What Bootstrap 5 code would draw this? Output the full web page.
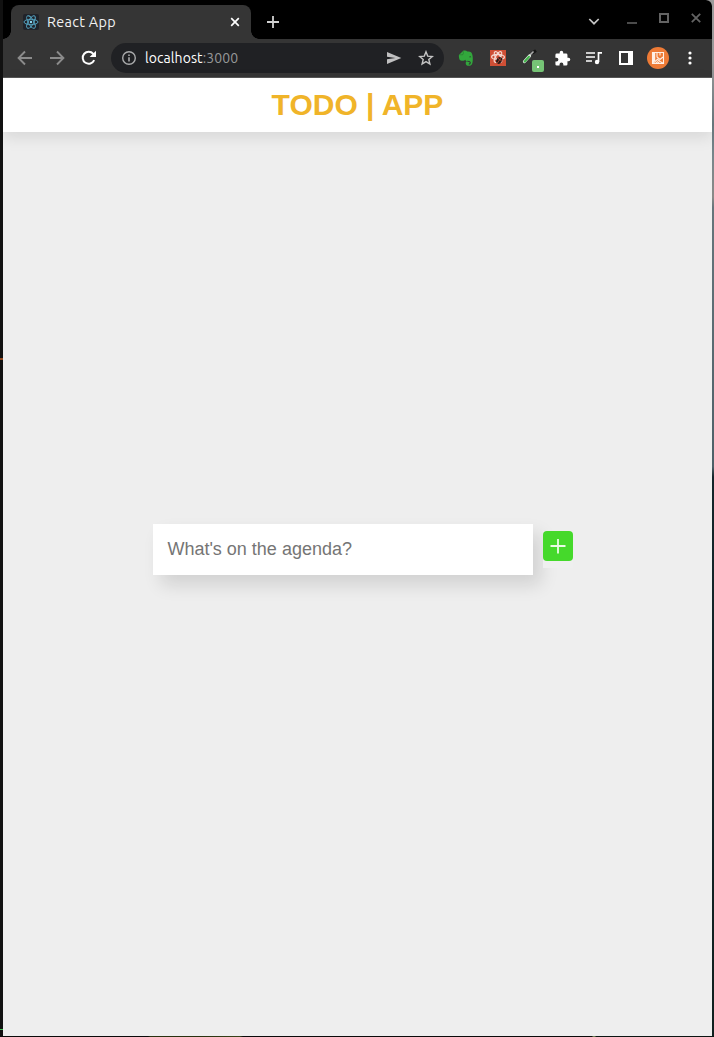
<!DOCTYPE html>
<html lang="en">
<head>
<meta charset="utf-8">
<title>React App</title>
<meta name="viewport" content="width=device-width, initial-scale=1">
<link href="https://cdn.jsdelivr.net/npm/bootstrap@5.3.0/dist/css/bootstrap.min.css" rel="stylesheet">
<style>
  body { background: linear-gradient(90deg, #0a0a0a 148px, #28300f 150px 200px, #38431a 240px, #0a0a0a 243px 592px, #6a7a50 593px 595px, #0c1513 596px) 0 100% / 100% 1px no-repeat, linear-gradient(90deg, #111 50%, transparent 50%), linear-gradient(#9b9b9b, #999 6%, #66757b 12%, #77868b 15%, #8b8a88 19%, #66757b 20%, #4e6068 45%, #14242a 46%, #10201f); overflow: hidden; }
  svg { display: block; flex: none; }
  .desk { height: 1037px; padding: 0 2px 1px 3px; position: relative; }
  .mark-l { position: absolute; left: 0; width: 3px; height: 2px; }
  .window { height: 1036px; border-radius: 0 6px 0 0; overflow: hidden; background: #eee; }
  .tabstrip { height: 39px; background: #000; padding: 5px 0 0 8px; }
  .tab { width: 240px; height: 34px; background: #353535; border-radius: 8px 8px 0 0; position: relative; padding: 0 10px 0 12px; color: #f1f1f1; font: 14.4px "Ubuntu", "Noto Sans", sans-serif; }
  .tab::before, .tab::after { content: ""; position: absolute; bottom: 0; width: 8px; height: 8px; }
  .tab::before { left: -8px; background: radial-gradient(circle at 0 0, #000 7.5px, #353535 8px); }
  .tab::after { right: -8px; background: radial-gradient(circle at 100% 0, #000 7.5px, #353535 8px); }
  .tab-title { letter-spacing: .32px; }
  .cell { width: 32px; height: 32px; display: flex; align-items: center; justify-content: center; flex: none; }
  .toolbar { height: 39px; background: #353535; border-bottom: 1px solid #585858; padding: 0 6px; }
  .address { height: 30px; border-radius: 15px; background: #202124; margin: 0 6px; padding-left: 10px; padding-right: 2px; font: 14px "Ubuntu", "Noto Sans", sans-serif; color: #fff; }
  .address .port { color: #969798; }
  .url { letter-spacing: .08px; }
  .app-head { height: 54px; background: #fff; color: #f0b429; font: bold 30px/54px "Liberation Sans", sans-serif; box-shadow: 0 5px 15px rgba(0,0,0,.1); position: relative; }
  .page { height: 904px; }
  .agenda { padding: 392px 0 0 150px; font-family: "Liberation Sans", sans-serif; }
  .agenda-input { width: 380px; height: 51px; border: 0; background: #fff; padding: 0 14.4px; font-size: 18px; box-shadow: 8px 10px 18px rgba(0,0,0,.12); outline: 0; }
  .agenda-input::placeholder { color: #757575; opacity: 1; }
  .add { width: 30px; height: 37px; border: 0; padding: 0; margin: 7px 0 0 10px; background: #efefef; position: relative; }
</style>
</head>
<body>
<div class="desk">
  <i class="mark-l" style="top:358px;background:#94481f"></i>
  <i class="mark-l" style="top:1029px;height:1px;background:#42bd55"></i>
  <div class="window d-flex flex-column">
    <div class="tabstrip d-flex">
      <div class="tab d-flex align-items-center">
        <svg width="16" height="16" viewBox="0 0 16 16"><rect width="16" height="16" rx="2" fill="#20232a"/><g fill="none" stroke="#56a8c6" stroke-width=".9"><ellipse cx="8" cy="8" rx="7" ry="2.7"/><ellipse cx="8" cy="8" rx="7" ry="2.7" transform="rotate(60 8 8)"/><ellipse cx="8" cy="8" rx="7" ry="2.7" transform="rotate(120 8 8)"/></g><circle cx="8" cy="8" r="1.2" fill="#8edcf6"/></svg>
        <span class="tab-title ms-2 me-auto">React App</span>
        <svg width="12" height="12" viewBox="0 0 12 12" stroke="#fff" stroke-width="1.7"><path d="M2.2 2.2l7.6 7.6M9.8 2.2L2.2 9.8"/></svg>
      </div>
      <div class="cell" style="margin:1px 0 0 6px"><svg width="12" height="12" viewBox="0 0 12 12" stroke="#d0d0d0" stroke-width="1.8"><path d="M6 0v12M0 6h12"/></svg></div>
      <div class="d-flex ms-auto" style="height:26px">
        <div class="cell me-2"><svg width="12" height="12" viewBox="0 0 12 12" fill="none" stroke="#c4c4c4" stroke-width="1.7"><path d="M1.300 4L6 8.700 10.700 4"/></svg></div>
        <div class="cell" style="margin-left:-2px"><svg width="10" height="12" viewBox="0 0 10 12"><path d="M0 7h10v2H0z" fill="#4b4b4b"/></svg></div>
        <div class="cell" style="height:26px"><svg width="10" height="10" viewBox="0 0 10 10"><path d="M1 1h8v8H1z" fill="none" stroke="#636363" stroke-width="2"/></svg></div>
        <div class="cell" style="height:26px"><svg width="10" height="10" viewBox="0 0 10 10" stroke="#636363" stroke-width="1.8"><path d="M.8.8l8.4 8.4M9.2.8L.8 9.2"/></svg></div>
      </div>
    </div>
    <div class="toolbar d-flex align-items-center">
      <div class="cell"><svg width="16" height="16" viewBox="0 0 16 16" fill="none" stroke="#8b8b8b" stroke-width="1.9"><path d="M15 8H2M8 1.5L1.6 8 8 14.5"/></svg></div>
      <div class="cell"><svg width="16" height="16" viewBox="0 0 16 16" fill="none" stroke="#8b8b8b" stroke-width="1.9"><path d="M1 8h13M8 1.5L14.4 8 8 14.5"/></svg></div>
      <div class="cell"><svg width="16" height="16" viewBox="0 0 16 16"><path d="M13.2 10.2A6 6 0 1 1 12.3 3.8L13.4 5" fill="none" stroke="#fff" stroke-width="2"/><path d="M15 .8V7H8.6z" fill="#fff"/></svg></div>
      <div class="address d-flex align-items-center flex-grow-1">
        <svg width="16" height="16" viewBox="0 0 16 16"><circle cx="8" cy="8" r="6.3" fill="none" stroke="#aaabac" stroke-width="1.4"/><path d="M7.2 7.2h1.6v4.3H7.2zM7.2 4.4h1.6V6H7.2z" fill="#aaabac"/></svg>
        <span class="url ms-2 me-auto">localhost<span class="port">:3000</span></span>
        <div class="cell"><svg width="16" height="16" viewBox="0 0 16 16"><path d="M1 2l14.3 6L1 14V9.3L9.5 8 1 6.7z" fill="#c0c0c1"/></svg></div>
        <div class="cell"><svg width="16" height="16" viewBox="0 0 16 16"><path d="M8 1.8l1.7 4.3 4.6.4-3.5 3 1.1 4.5L8 11.6 4.1 14l1.1-4.5-3.5-3 4.6-.4z" fill="none" stroke="#c4c4c4" stroke-width="1.4"/></svg></div>
      </div>
      <div class="cell"><svg width="16" height="16" viewBox="0 0 16 16"><path fill="#32a73c" d="M5.500.6Q8 0 9.300 1.400c1.800 0 3.800.3 4.200 1.300.9 1.500 1.300 3.300 1.300 6.300 0 4-.8 6.800-3.600 6.800-2.400 0-3.500-1-3.500-2.600 0-.9.500-1.600 1.200-2-.9-.3-1.400-.8-1.700-1.500-.7 1-2.500 1.400-4.500.8C1.300 10 .7 7.500.9 4.900L5 .9z"/><path d="M1.500 4.800h2.600q1.200 0 1.200-1.200V1.200" fill="none" stroke="#2a7030" stroke-width=".6"/><path d="M9.300 11.200c1.800 0 3 .2 3 1.600 0 .8-.5 1.300-1.500 1.300" fill="none" stroke="#353535" stroke-width="1.100"/><path d="M11.200 7.200c.3-1.300 1.600-1.200 2 .1-.7-.2-1.300-.2-2-.1z" fill="#303830"/></svg></div>
      <div class="cell"><svg width="16" height="16" viewBox="0 0 16 16"><rect width="16" height="16" fill="#cf4f35"/><g fill="none" stroke="#f5d8d0" stroke-width="1.300"><ellipse cx="8" cy="7" rx="6.400" ry="2.500"/><ellipse cx="8" cy="7" rx="6" ry="2.400" transform="rotate(60 8 7)"/><ellipse cx="8" cy="7" rx="6" ry="2.400" transform="rotate(120 8 7)"/></g><g transform="rotate(35 9.500 10)"><ellipse cx="9.500" cy="10.500" rx="2.700" ry="3.600" fill="#271916"/><path d="M9.500 8v6M7 9.500h5" stroke="#b84a34" stroke-width=".8"/></g></svg></div>
      <div class="cell"><svg width="28" height="28" viewBox="0 0 28 28"><path d="M16.500 9L20 6.500" stroke="#171717" stroke-width="3"/><path d="M13.500 11.500l4-4" stroke="#aaa" stroke-width="1.600"/><path d="M8.500 17.500l5-5.500" stroke="#ddeadd" stroke-width="3.200" stroke-linecap="round"/><path d="M8.700 17.500l4.300-4.700" stroke="#42b54b" stroke-width="2" stroke-linecap="round"/><rect x="16" y="16" width="12" height="12" rx="2" fill="#76c476"/><path d="M21 22h2v2h-2z" fill="#fff"/></svg></div>
      <div class="cell"><svg width="17" height="17" viewBox="0 0 24 24"><path fill="#fff" d="M20.500 11H19V7a2 2 0 0 0-2-2h-4V3.500a2.500 2.500 0 0 0-5 0V5H4a2 2 0 0 0-2 2v3.800h1.500a2.700 2.700 0 0 1 0 5.400H2V20a2 2 0 0 0 2 2h3.800v-1.500a2.700 2.700 0 0 1 5.400 0V22H17a2 2 0 0 0 2-2v-4h1.500a2.500 2.500 0 0 0 0-5z"/></svg></div>
      <div class="cell"><svg width="16" height="14" viewBox="0 0 16 14"><path d="M0 2h9M0 6h9M0 10h6" stroke="#fff" stroke-width="1.600"/><path d="M12.500 11V1.900h3.500" fill="none" stroke="#fff" stroke-width="1.700"/><circle cx="11" cy="11" r="2.200" fill="#fff"/></svg></div>
      <div class="cell"><svg width="14" height="14" viewBox="0 0 14 14"><path d="M0 0h14v14H0zM2 2v10h7V2z" fill="#fff" fill-rule="evenodd"/></svg></div>
      <div class="cell"><svg width="22" height="22" viewBox="0 0 22 22"><circle cx="11" cy="11" r="11" fill="#ee7b36"/><path d="M5 5h3.200v8.500L5 17z" fill="#fff0e6"/><path d="M5.500 5.500h11v11h-11zM10 5.500V10l3 2.500 3-2.500M13 5.500v3M6 16.300l4.500-4 2.500 2.200 3.500 2M8.500 16.500l2-1.800 2 1.800" fill="none" stroke="#fff0e6" stroke-width="1.100"/></svg></div>
      <div class="cell"><svg width="4" height="14" viewBox="0 0 4 14" fill="#fff"><circle cx="2" cy="2" r="1.600"/><circle cx="2" cy="7" r="1.600"/><circle cx="2" cy="12" r="1.600"/></svg></div>
    </div>
    <header class="app-head text-center">TODO | APP</header>
    <main class="page">
      <form class="agenda d-flex align-items-start">
        <input class="agenda-input" type="text" placeholder="What's on the agenda?" aria-label="Agenda item">
        <button class="add" type="button" aria-label="Add"><svg width="30" height="37" viewBox="0 0 30 37"><rect width="30" height="30" rx="4" fill="#45d92b"/><path d="M15 8v14.500M7.500 15H22.500" stroke="#e9fbe6" stroke-width="1.800"/></svg></button>
      </form>
    </main>
  </div>
</div>
<script src="https://cdn.jsdelivr.net/npm/bootstrap@5.3.0/dist/js/bootstrap.bundle.min.js"></script>
</body>
</html>
